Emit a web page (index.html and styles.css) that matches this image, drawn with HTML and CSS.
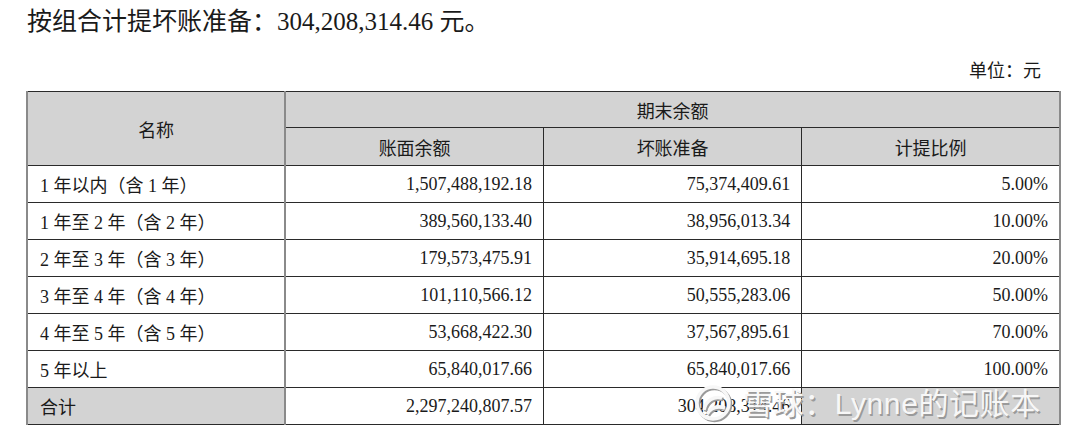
FILE: index.html
```html
<!DOCTYPE html>
<html lang="zh">
<head>
<meta charset="utf-8">
<title>按组合计提坏账准备</title>
<link rel="stylesheet" href="styles.css">
</head>
<body>
<div class="page">
  <h1 class="title">按组合计提坏账准备：<span class="num">304,208,314.46</span> 元。</h1>
  <div class="unit">单位：元</div>
  <table class="tbl">
    <colgroup>
      <col class="col"><col class="col"><col class="col"><col class="col">
    </colgroup>
    <thead>
      <tr class="hr1">
        <th rowspan="2" class="first">名称</th>
        <th colspan="3" class="last">期末余额</th>
      </tr>
      <tr class="hr2">
        <th>账面余额</th>
        <th>坏账准备</th>
        <th class="last">计提比例</th>
      </tr>
    </thead>
    <tbody>
      <tr><td class="first">1 年以内（含 1 年）</td><td>1,507,488,192.18</td><td>75,374,409.61</td><td class="last">5.00%</td></tr>
      <tr><td class="first">1 年至 2 年（含 2 年）</td><td>389,560,133.40</td><td>38,956,013.34</td><td class="last">10.00%</td></tr>
      <tr><td class="first">2 年至 3 年（含 3 年）</td><td>179,573,475.91</td><td>35,914,695.18</td><td class="last">20.00%</td></tr>
      <tr><td class="first">3 年至 4 年（含 4 年）</td><td>101,110,566.12</td><td>50,555,283.06</td><td class="last">50.00%</td></tr>
      <tr><td class="first">4 年至 5 年（含 5 年）</td><td>53,668,422.30</td><td>37,567,895.61</td><td class="last">70.00%</td></tr>
      <tr><td class="first">5 年以上</td><td>65,840,017.66</td><td>65,840,017.66</td><td class="last">100.00%</td></tr>
      <tr class="total"><td class="first shade">合计</td><td>2,297,240,807.57</td><td>304,208,314.46</td><td class="last shade"></td></tr>
    </tbody>
  </table>
  <div class="watermark">
    <svg class="logo" width="46" height="40" viewBox="0 0 46 40">
      <g fill="none" stroke="#9a9a9a" stroke-width="3.5" transform="translate(1.5,1.5)">
        <circle cx="21" cy="19" r="16"/>
        <path d="M12 26 C 14 16, 22 12, 30 14"/>
        <path d="M15 30 C 20 22, 27 22, 33 24"/>
      </g>
      <g fill="none" stroke="#f7f7f7" stroke-width="3.5">
        <circle cx="21" cy="19" r="16"/>
        <path d="M12 26 C 14 16, 22 12, 30 14"/>
        <path d="M15 30 C 20 22, 27 22, 33 24"/>
      </g>
    </svg>
    <span class="wm-text">雪球：Lynne的记账本</span>
  </div>
</div>
</body>
</html>
```

FILE: styles.css
```css
html, body {
  margin: 0;
  padding: 0;
  background: #ffffff;
}

.page {
  position: relative;
  width: 1080px;
  height: 436px;
  overflow: hidden;
  font-family: "Liberation Serif", "Noto Sans CJK SC", serif;
  color: #1a1a1a;
}

.title {
  margin: 0;
  padding: 7px 0 0 27px;
  height: 38px;
  box-sizing: border-box;
  font-size: 25px;
  line-height: 30px;
  font-weight: normal;
}

.unit {
  height: 53px;
  box-sizing: border-box;
  padding: 22px 39px 0 0;
  text-align: right;
  font-size: 18px;
  line-height: 22px;
}

.tbl {
  margin-left: 26px;
  width: 1035px;
  table-layout: fixed;
  border-collapse: collapse;
  font-size: 18px;
}

.col {
  width: 25%;
}

.tbl th,
.tbl td {
  border: 1px solid #2a2a2a;
  padding: 0 11px;
  white-space: nowrap;
}

.tbl th {
  background: #d3d3d3;
  font-weight: normal;
  text-align: center;
}

.hr1 th {
  height: 35px;
}

.hr2 th {
  height: 37px;
}

.tbl td {
  height: 36px;
  text-align: right;
}

.tbl .first {
  border-left: 2px solid #8a8a8a;
  border-right: 2px solid #8a8a8a;
}

.tbl td.first {
  text-align: left;
  padding-left: 12px;
}

.tbl .last {
  border-right: 2px solid #8a8a8a;
}

.tbl td.last {
  padding-right: 11px;
}

.tbl .shade {
  background: #d3d3d3;
}

.watermark {
  position: absolute;
  left: 692px;
  top: 385px;
  display: flex;
  align-items: center;
  gap: 5px;
  height: 38px;
}

.logo {
  display: block;
}

.wm-text {
  font-family: "Liberation Sans", "Noto Sans CJK SC", sans-serif;
  font-size: 30px;
  line-height: 34px;
  color: #f7f7f7;
  text-shadow: 1.5px 1.5px 0 #9a9a9a;
  letter-spacing: 0.6px;
}
```
